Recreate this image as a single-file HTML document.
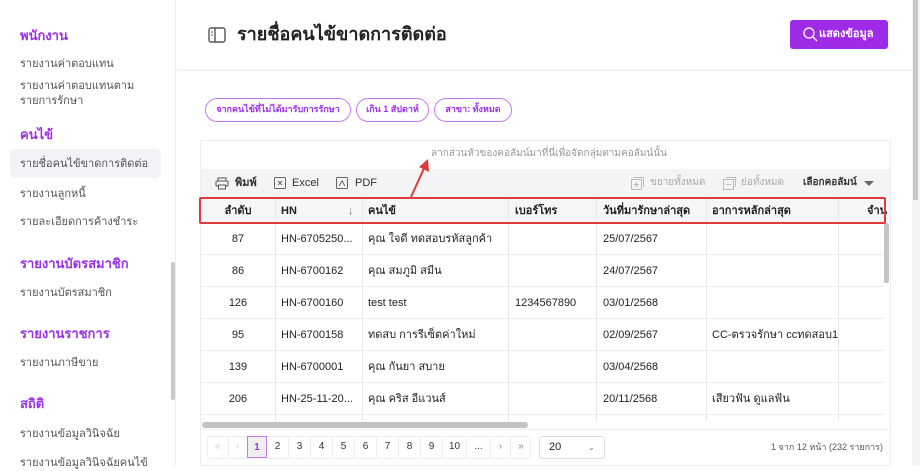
<!DOCTYPE html>
<html><head><meta charset="utf-8"><style>
*{box-sizing:border-box;margin:0;padding:0}
body{width:920px;height:466px;overflow:hidden;background:#fff;font-family:"Liberation Sans","Noto Sans CJK SC",sans-serif;color:#222;position:relative;line-height:1.25}
.a{position:absolute;white-space:nowrap}
.sh{color:#9b30e8;font-weight:bold;font-size:13px;left:20px}
.si{color:#555;font-size:11px;left:20px;margin-top:2px}
.chip{border:1.5px solid #c77bf0;border-radius:12px;color:#9b30e8;font-size:9px;font-weight:bold;height:24px;line-height:21px;text-align:center;top:98px}
.th{font-size:11px;font-weight:bold;top:205px}
.td{font-size:11px;margin-top:2px}
.vl{position:absolute;width:1px;background:#e8e8e8}
.hl{position:absolute;height:1px;background:#ededed;left:201px;width:683px}
.pg{position:absolute;top:436px;height:22px;width:22px;text-align:center;line-height:22px;font-size:10px;color:#333;border-right:1px solid #eee}
</style></head><body>
<div class="a" style="left:0;top:0;width:176px;height:466px;border-right:1px solid #eee"></div>
<div class="a" style="left:171px;top:262px;width:4px;height:138px;background:#c8c8c8;border-radius:2px"></div>
<div class="a sh" style="top:28px">พนักงาน</div>
<div class="a si" style="top:56px">รายงานค่าตอบแทน</div>
<div class="a si" style="top:78px">รายงานค่าตอบแทนตาม</div>
<div class="a si" style="top:93px">รายการรักษา</div>
<div class="a sh" style="top:127px">คนไข้</div>
<div class="a" style="left:10px;top:149px;width:151px;height:29px;background:#f1f3f7;border-radius:6px"></div>
<div class="a si" style="top:156px">รายชื่อคนไข้ขาดการติดต่อ</div>
<div class="a si" style="top:186px">รายงานลูกหนี้</div>
<div class="a si" style="top:214px">รายละเอียดการค้างชำระ</div>
<div class="a sh" style="top:256px">รายงานบัตรสมาชิก</div>
<div class="a si" style="top:285px">รายงานบัตรสมาชิก</div>
<div class="a sh" style="top:326px">รายงานราชการ</div>
<div class="a si" style="top:355px">รายงานภาษีขาย</div>
<div class="a sh" style="top:396px">สถิติ</div>
<div class="a si" style="top:426px">รายงานข้อมูลวินิจฉัย</div>
<div class="a si" style="top:455px">รายงานข้อมูลวินิจฉัยคนไข้</div>
<div class="a" style="left:177px;top:69px;width:735px;height:2px;background:#f2f2f2"></div>
<svg class="a" style="left:208px;top:27px" width="18" height="16" viewBox="0 0 18 16"><rect x="1" y="1" width="16" height="14" rx="2" fill="none" stroke="#555" stroke-width="1.4"/><line x1="7" y1="1" x2="7" y2="15" stroke="#555" stroke-width="1.4"/><line x1="3" y1="5" x2="5" y2="5" stroke="#555"/><line x1="3" y1="8" x2="5" y2="8" stroke="#555"/></svg>
<div class="a" style="left:237px;top:23px;font-size:18px;font-weight:bold;color:#222">รายชื่อคนไข้ขาดการติดต่อ</div>
<div class="a" style="left:790px;top:20px;width:98px;height:29px;background:#9f2be6;border-radius:3px;color:#fff;font-size:11px;font-weight:bold;line-height:29px;padding-left:29px">แสดงข้อมูล</div>
<svg class="a" style="left:803px;top:27px" width="15" height="15" viewBox="0 0 15 15"><circle cx="6" cy="6" r="5" fill="none" stroke="#fff" stroke-width="1.3"/><line x1="10" y1="10" x2="14" y2="14" stroke="#fff" stroke-width="1.3"/></svg>
<div class="a" style="left:912px;top:0;width:8px;height:466px;background:#f3f3f3"></div>
<div class="a" style="left:913px;top:0;width:5px;height:200px;background:#c8c8c8"></div>
<div class="a chip" style="left:205px;width:146px">จากคนไข้ที่ไม่ได้มารับการรักษา</div>
<div class="a chip" style="left:356px;width:73px">เกิน 1 สัปดาห์</div>
<div class="a chip" style="left:434px;width:78px">สาขา: ทั้งหมด</div>
<div class="a" style="left:200px;top:140px;width:691px;height:326px;border:1px solid #eee"></div>
<div class="a" style="left:431px;top:148px;font-size:10px;color:#999">ลากส่วนหัวของคอลัมน์มาที่นี่เพื่อจัดกลุ่มตามคอลัมน์นั้น</div>
<div class="a" style="left:201px;top:169px;width:689px;height:28px;background:#f3f4f6"></div>
<svg class="a" style="left:215px;top:177px" width="14" height="13" viewBox="0 0 14 13"><rect x="3" y="1" width="8" height="3" fill="none" stroke="#555"/><rect x="1" y="4" width="12" height="5" rx="1" fill="none" stroke="#555"/><rect x="3.5" y="8" width="7" height="4" fill="#f3f4f6" stroke="#555"/></svg>
<div class="a" style="left:235px;top:177px;font-size:11px;font-weight:bold;color:#333">พิมพ์</div>
<svg class="a" style="left:274px;top:177px" width="12" height="12"><rect x=".5" y=".5" width="11" height="11" rx="1" fill="none" stroke="#666"/><path d="M4 4l4 4M8 4l-4 4" stroke="#666"/></svg>
<div class="a" style="left:292px;top:177px;font-size:11px;color:#333">Excel</div>
<svg class="a" style="left:336px;top:177px" width="12" height="12"><rect x=".5" y=".5" width="11" height="11" rx="1" fill="none" stroke="#666"/><path d="M3 9l3-5 3 5" fill="none" stroke="#666"/></svg>
<div class="a" style="left:355px;top:177px;font-size:11px;color:#333">PDF</div>
<svg class="a" style="left:631px;top:177px" width="13" height="13"><rect x=".5" y="2.5" width="10" height="10" fill="none" stroke="#bbb"/><path d="M3 .5h9.5V10" fill="none" stroke="#bbb"/><path d="M5.5 5v5M3 7.5h5" stroke="#bbb"/></svg>
<div class="a" style="left:650px;top:177px;font-size:10px;color:#aaa">ขยายทั้งหมด</div>
<svg class="a" style="left:723px;top:177px" width="13" height="13"><rect x=".5" y="2.5" width="10" height="10" fill="none" stroke="#bbb"/><path d="M3 .5h9.5V10" fill="none" stroke="#bbb"/><path d="M3 7.5h5" stroke="#bbb"/></svg>
<div class="a" style="left:741px;top:177px;font-size:10px;color:#aaa">ย่อทั้งหมด</div>
<div class="a" style="left:803px;top:177px;font-size:10px;font-weight:bold;color:#333">เลือกคอลัมน์</div>
<div class="a" style="left:864px;top:181px;border-left:5px solid transparent;border-right:5px solid transparent;border-top:5px solid #666"></div>
<div class="a" style="left:201px;top:198px;width:689px;height:25px;background:#f5f6f8"></div>
<div class="a th" style="left:201px;width:74px;text-align:center">ลำดับ</div>
<div class="a th" style="left:281px">HN</div>
<div class="a" style="left:348px;top:205px;font-size:11px;color:#777">↓</div>
<div class="a th" style="left:368px">คนไข้</div>
<div class="a th" style="left:515px">เบอร์โทร</div>
<div class="a th" style="left:603px">วันที่มารักษาล่าสุด</div>
<div class="a th" style="left:712px">อาการหลักล่าสุด</div>
<div class="a th" style="left:867px">จำน</div>
<div class="vl" style="left:275px;top:198px;height:224px"></div>
<div class="vl" style="left:362px;top:198px;height:224px"></div>
<div class="vl" style="left:508px;top:198px;height:224px"></div>
<div class="vl" style="left:596px;top:198px;height:224px"></div>
<div class="vl" style="left:706px;top:198px;height:224px"></div>
<div class="vl" style="left:838px;top:198px;height:224px"></div>
<div class="hl" style="top:254px"></div><div class="hl" style="top:286px"></div><div class="hl" style="top:318px"></div><div class="hl" style="top:350px"></div><div class="hl" style="top:382px"></div><div class="hl" style="top:414px"></div>
<div class="a" style="left:884px;top:223px;width:5px;height:60px;background:#c4c4c4;border-radius:2px"></div>
<div class="a td" style="left:201px;width:74px;text-align:center;top:231px">87</div><div class="a td" style="left:281px;top:231px">HN-6705250...</div><div class="a td" style="left:368px;top:231px">คุณ ใจดี ทดสอบรหัสลูกค้า</div><div class="a td" style="left:603px;top:231px">25/07/2567</div>
<div class="a td" style="left:201px;width:74px;text-align:center;top:263px">86</div><div class="a td" style="left:281px;top:263px">HN-6700162</div><div class="a td" style="left:368px;top:263px">คุณ สมภูมิ สมีน</div><div class="a td" style="left:603px;top:263px">24/07/2567</div>
<div class="a td" style="left:201px;width:74px;text-align:center;top:295px">126</div><div class="a td" style="left:281px;top:295px">HN-6700160</div><div class="a td" style="left:368px;top:295px">test test</div><div class="a td" style="left:515px;top:295px">1234567890</div><div class="a td" style="left:603px;top:295px">03/01/2568</div>
<div class="a td" style="left:201px;width:74px;text-align:center;top:327px">95</div><div class="a td" style="left:281px;top:327px">HN-6700158</div><div class="a td" style="left:368px;top:327px">ทดสบ การรีเซ็ตค่าใหม่</div><div class="a td" style="left:603px;top:327px">02/09/2567</div><div class="a td" style="left:712px;top:327px">CC-ตรวจรักษา ccทดสอบ1</div>
<div class="a td" style="left:201px;width:74px;text-align:center;top:359px">139</div><div class="a td" style="left:281px;top:359px">HN-6700001</div><div class="a td" style="left:368px;top:359px">คุณ กันยา สบาย</div><div class="a td" style="left:603px;top:359px">03/04/2568</div>
<div class="a td" style="left:201px;width:74px;text-align:center;top:391px">206</div><div class="a td" style="left:281px;top:391px">HN-25-11-20...</div><div class="a td" style="left:368px;top:391px">คุณ คริส อีแวนส์</div><div class="a td" style="left:603px;top:391px">20/11/2568</div><div class="a td" style="left:712px;top:391px">เสียวฟัน ดูแลฟัน</div>
<div class="a" style="left:201px;top:421px;width:689px;height:9px;background:#fff"></div>
<div class="a" style="left:202px;top:422px;width:326px;height:6px;background:#c2c2c2;border-radius:3px"></div>
<div class="a" style="left:201px;top:429px;width:689px;height:1px;background:#eee"></div>
<div class="a" style="left:199px;top:197px;width:687px;height:27px;border:2px solid #e03a3a;border-radius:2px"></div>
<svg class="a" style="left:400px;top:155px" width="40" height="45"><line x1="11" y1="42" x2="26" y2="9" stroke="#e03a3a" stroke-width="2"/><path d="M28 4l1 13-10-5z" fill="#e03a3a"/></svg>
<div class="a" style="left:207px;top:436px;width:324px;height:23px;border:1px solid #eee;border-radius:3px"></div>
<div class="pg" style="left:207px;color:#ccc">«</div><div class="pg" style="left:227px;color:#ccc">‹</div>
<div class="pg" style="left:247px;width:20px;background:#eee;border:1.5px solid #c77bf0;font-weight:bold;color:#9b30e8">1</div>
<div class="pg" style="left:267px">2</div><div class="pg" style="left:289px">3</div><div class="pg" style="left:311px">4</div><div class="pg" style="left:333px">5</div><div class="pg" style="left:355px">6</div><div class="pg" style="left:377px">7</div><div class="pg" style="left:399px">8</div><div class="pg" style="left:421px">9</div><div class="pg" style="left:443px;width:24px">10</div><div class="pg" style="left:467px;width:24px">...</div><div class="pg" style="left:491px;width:20px;color:#888">›</div><div class="pg" style="left:511px;width:20px;color:#888;border:0">»</div>
<div class="a" style="left:539px;top:436px;width:66px;height:23px;border:1px solid #ddd;border-radius:3px;font-size:11px;line-height:21px;padding-left:9px">20<span style="position:absolute;left:48px;font-size:8px;color:#777">⌄</span></div>
<div class="a" style="right:37px;top:442px;font-size:9px;color:#555">1 จาก 12 หน้า (232 รายการ)</div>
</body></html>
